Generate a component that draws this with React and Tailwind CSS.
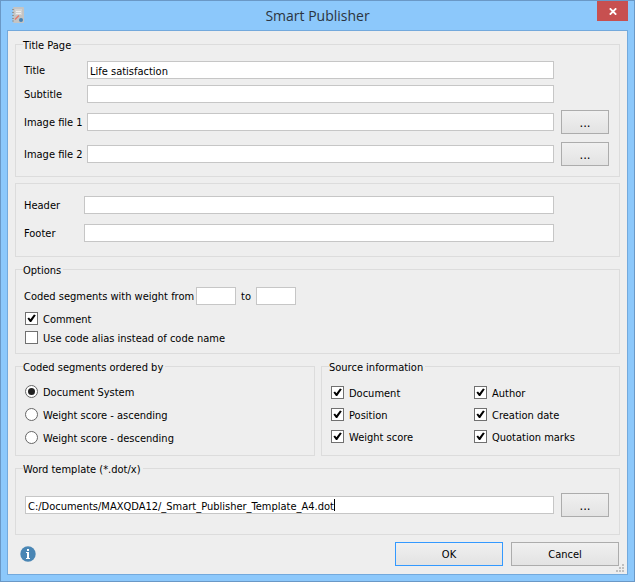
import React, { useState } from "react";

const inputClass =
  "h-[18px] min-w-0 border border-[#c6c6c6] bg-white px-[2px] pt-[2px] text-[11px] leading-4 text-black outline-none";

function Group({ legend, className = "", children }) {
  return (
    <fieldset className={`min-w-0 border border-[#dcdcdc] ${className}`}>
      {legend && (
        <legend className="ml-[7px] h-[13px] pr-[2px] leading-4">{legend}</legend>
      )}
      {children}
    </fieldset>
  );
}

function BrowseButton({ label }) {
  return (
    <button
      type="button"
      aria-label={label}
      className="h-6 w-12 shrink-0 border border-[#acacac] bg-linear-to-b from-[#f0f0f0] to-[#e3e3e3] pt-px text-[13px] leading-5"
    >
      ...
    </button>
  );
}

function TextRow({ id, label, value = "", labelClass = "w-[63px]", browse }) {
  return (
    <div className={`flex items-center gap-[7px] ${browse ? "" : "pr-[55px]"}`}>
      <div className="flex min-w-0 flex-1 items-center">
        <label htmlFor={id} className={`shrink-0 pt-[2px] leading-4 ${labelClass}`}>
          {label}
        </label>
        <input id={id} type="text" defaultValue={value} className={`${inputClass} flex-1`} />
      </div>
      {browse && <BrowseButton label={`Browse ${label}`} />}
    </div>
  );
}

function Check({ label, checked = false }) {
  return (
    <label className="flex h-[13px] items-center gap-[5px] whitespace-nowrap">
      <span className="relative h-[13px] w-[13px] shrink-0">
        <input
          type="checkbox"
          defaultChecked={checked}
          className="peer block h-[13px] w-[13px] appearance-none border border-[#707070] bg-white"
        />
        <svg
          viewBox="0 0 13 13"
          className="pointer-events-none absolute inset-0 hidden h-[13px] w-[13px] peer-checked:block"
        >
          <path d="M2.4 6.4 L4 5.4 L5.4 7.2 L9 2.6 L10.8 3.2 L6.2 10 L5 10 Z" fill="#000" />
        </svg>
      </span>
      <span className="pt-[2px] leading-4">{label}</span>
    </label>
  );
}

function Radio({ label, checked, onChange }) {
  return (
    <label className="flex h-[13px] items-center gap-[5px] whitespace-nowrap">
      <span className="relative h-[13px] w-[13px] shrink-0">
        <input
          type="radio"
          name="order"
          checked={checked}
          onChange={onChange}
          className="peer block h-[13px] w-[13px] appearance-none rounded-full border border-[#666666] bg-white"
        />
        <span className="pointer-events-none absolute inset-[3px] hidden rounded-full bg-[#212121] peer-checked:block" />
      </span>
      <span className="pt-[2px] leading-4">{label}</span>
    </label>
  );
}

const orders = ["Document System", "Weight score - ascending", "Weight score - descending"];
const sources = [
  "Document",
  "Author",
  "Position",
  "Creation date",
  "Weight score",
  "Quotation marks",
];

export default function App() {
  const [order, setOrder] = useState(orders[0]);

  return (
    <div className="flex min-h-screen flex-col border border-[#6a98c6] bg-[#8cc8fb] px-[6px] pb-[6px] font-['DejaVu_Sans_Condensed','DejaVu_Sans',sans-serif] text-[11px] text-black">
      <header className="grid h-[29px] grid-cols-[31px_1fr_31px] items-start">
        <svg viewBox="0 0 12 16" className="mt-[6px] ml-[5px] h-4 w-3" aria-hidden="true">
          <rect x="1" y="0" width="11" height="16" rx="1" fill="#c4c4c4" />
          <path d="M0 2.5h2M0 5.5h2M0 8.5h2M0 11.5h2M0 14h2" stroke="#8f9699" />
          <rect x="3" y="2" width="7" height="6" fill="#d2d2d2" />
          <path d="M4 4.5h5M4 6.5h5" stroke="#eeeeee" />
          <path d="M3 12.5l4-4" stroke="#e5796b" strokeWidth="1.5" />
          <circle cx="9" cy="13" r="2" fill="#4682b4" />
        </svg>
        <h1 className="text-center font-['Open_Sans',sans-serif] text-[14px] leading-[29px] text-[#2b3440]">
          Smart Publisher
        </h1>
        <button
          type="button"
          aria-label="Close"
          className="flex h-5 w-[31px] items-center justify-center bg-[#c75050]"
        >
          <svg viewBox="0 0 8 7" className="mt-px h-[7px] w-2" aria-hidden="true">
            <path d="M0.8 0.3l6.4 6.4M7.2 0.3L0.8 6.7" stroke="#fff" strokeWidth="1.8" />
          </svg>
        </button>
      </header>

      <form
        className="relative flex flex-1 flex-col border border-[#73a9dc] bg-[#eeeeee] px-[7px] pt-[7px] pb-2"
        onSubmit={(e) => e.preventDefault()}
      >
        <Group legend="Title Page">
          <div className="flex flex-col pt-[10px] pr-[10px] pb-[10px] pl-2">
            <TextRow id="title" label="Title" value="Life satisfaction" />
            <div className="mt-[6px] mb-[7px]">
              <TextRow id="subtitle" label="Subtitle" />
            </div>
            <div className="flex flex-col gap-2">
              <TextRow id="image1" label="Image file 1" browse />
              <TextRow id="image2" label="Image file 2" browse />
            </div>
          </div>
        </Group>

        <Group className="mt-[6px]">
          <div className="flex flex-col gap-[10px] pt-3 pr-[10px] pb-[14px] pl-2">
            <TextRow id="header" label="Header" labelClass="w-[60px]" />
            <TextRow id="footer" label="Footer" labelClass="w-[60px]" />
          </div>
        </Group>

        <Group legend="Options" className="mt-[6px]">
          <div className="pt-[11px] pb-2 pl-2">
            <div className="flex items-center">
              <label htmlFor="from" className="w-[172px] pt-[2px] leading-4 whitespace-nowrap">
                Coded segments with weight from
              </label>
              <input id="from" type="text" className={`${inputClass} w-10`} />
              <label htmlFor="to" className="w-5 pt-[2px] text-center leading-4">
                to
              </label>
              <input id="to" type="text" className={`${inputClass} w-10`} />
            </div>
            <div className="flex flex-col gap-[6px] pt-[7px] pb-px pl-px">
              <Check label="Comment" checked />
              <Check label="Use code alias instead of code name" />
            </div>
          </div>
        </Group>

        <div className="mt-[6px] grid grid-cols-[300fr_299fr] gap-[6px]">
          <Group legend="Coded segments ordered by">
            <div className="flex flex-col gap-[10px] pt-3 pb-[11px] pl-[9px]">
              {orders.map((o) => (
                <Radio key={o} label={o} checked={order === o} onChange={() => setOrder(o)} />
              ))}
            </div>
          </Group>
          <Group legend="Source information">
            <div className="grid grid-cols-[143px_1fr] gap-y-[9px] pt-[13px] pl-[9px]">
              {sources.map((s) => (
                <Check key={s} label={s} checked />
              ))}
            </div>
          </Group>
        </div>

        <Group legend="Word template (*.dot/x)" className="mt-[6px]">
          <div className="flex items-center gap-[7px] pt-[18px] pr-[10px] pb-[17px] pl-[9px]">
            <div className="relative flex min-w-0 flex-1">
              <input
                type="text"
                aria-label="Word template"
                defaultValue="C:/Documents/MAXQDA12/_Smart_Publisher_Template_A4.dot"
                className={`${inputClass} flex-1`}
              />
              <span className="absolute top-[3px] left-[309px] h-3 w-px bg-black" />
            </div>
            <BrowseButton label="Browse Word template" />
          </div>
        </Group>

        <div className="mt-[7px] flex items-center">
          <button type="button" aria-label="Information" className="ml-[5px]">
            <svg viewBox="0 0 16 16" className="block h-4 w-4" aria-hidden="true">
              <circle cx="8" cy="8" r="7.7" fill="#4a86b4" />
              <path d="M7 3h2v2H7zM6 6h3v6h1v1H6v-1h1V7H6z" fill="#fff" />
            </svg>
          </button>
          <div className="ml-auto flex gap-2 pr-px">
            <button
              type="submit"
              className="h-6 w-[108px] border border-[#3399ff] bg-linear-to-b from-[#f0f0f0] to-[#e3e3e3] pt-[2px]"
            >
              OK
            </button>
            <button
              type="button"
              className="h-6 w-[108px] border border-[#acacac] bg-linear-to-b from-[#f0f0f0] to-[#e3e3e3] pt-[2px]"
            >
              Cancel
            </button>
          </div>
        </div>

        <svg
          viewBox="0 0 8 8"
          className="absolute right-[3px] bottom-[2px] h-2 w-2"
          fill="#bfbfbf"
          aria-hidden="true"
        >
          <path d="M6 0h2v2H6zM3 3h2v2H3zM6 3h2v2H6zM0 6h2v2H0zM3 6h2v2H3zM6 6h2v2H6z" />
        </svg>
      </form>
    </div>
  );
}
